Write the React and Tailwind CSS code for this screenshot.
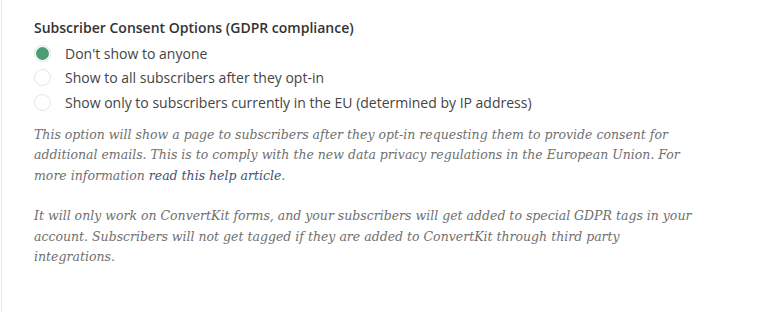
const options = [
  { id: 'none', label: "Don't show to anyone" },
  { id: 'all', label: 'Show to all subscribers after they opt-in' },
  { id: 'eu', label: 'Show only to subscribers currently in the EU (determined by IP address)' },
];

function Radio({ checked }) {
  return (
    <span className="flex h-[17px] w-[17px] items-center justify-center rounded-full border border-[#e2e4e7] bg-white">
      {checked && <span className="h-[13px] w-[13px] rounded-full bg-[#4a9e74]" />}
    </span>
  );
}

export default function App() {
  const selected = 'none';

  return (
    <div className="min-h-[312px] w-[764px] bg-white">
      <div className="ml-[1px] min-h-[312px] border-l border-[#e6e6e6] pl-[32px] pt-[18px]">
        <h3 className="text-[14px] font-semibold leading-[20px] text-[#333] [font-family:'Open_Sans',sans-serif]">
          Subscriber Consent Options (GDPR compliance)
        </h3>

        <div className="mt-[3px] flex flex-col">
          {options.map((opt) => (
            <label key={opt.id} className="flex h-[24.5px] items-center">
              <Radio checked={opt.id === selected} />
              <span className="ml-[14px] text-[14px] text-[#444] [font-family:'Open_Sans',sans-serif]">
                {opt.label}
              </span>
            </label>
          ))}
        </div>

        <div className="mt-[10px] w-[700px] text-[12.5px] italic leading-[20.5px] text-[#6f6f6f] [font-family:'DejaVu_Serif',serif]">
          <p>
            This option will show a page to subscribers after they opt-in requesting them to provide consent for
            <br />
            additional emails. This is to comply with the new data privacy regulations in the European Union. For
            <br />
            more information <a className="text-[#46516f]">read this help article</a>.
          </p>
          <p className="mt-[20px]">
            It will only work on ConvertKit forms, and your subscribers will get added to special GDPR tags in your
            <br />
            account. Subscribers will not get tagged if they are added to ConvertKit through third party
            <br />
            integrations.
          </p>
        </div>
      </div>
    </div>
  );
}
